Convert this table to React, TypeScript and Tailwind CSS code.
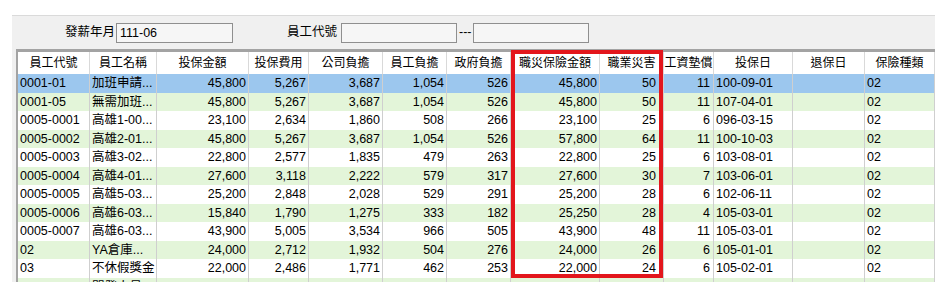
import React from "react";

type Align = "l" | "r"

const columns: { label: string, align: Align, pad?: string }[] = [
    {label: "員工代號", align: "l"},
    {label: "員工名稱", align: "l"},
    {label: "投保金額", align: "r"},
    {label: "投保費用", align: "r"},
    {label: "公司負擔", align: "r"},
    {label: "員工負擔", align: "r"},
    {label: "政府負擔", align: "r"},
    {label: "職災保險金額", align: "r"},
    {label: "職業災害", align: "r", pad: "pr-[7px]"},
    {label: "工資墊償", align: "r", pad: "pr-[3px]"},
    {label: "投保日", align: "l"},
    {label: "退保日", align: "l"},
    {label: "保險種類", align: "l"},
]

const rows: string[][] = [
    ["0001-01", "加班申請...", "45,800", "5,267", "3,687", "1,054", "526", "45,800", "50", "11", "100-09-01", "", "02"],
    ["0001-05", "無需加班...", "45,800", "5,267", "3,687", "1,054", "526", "45,800", "50", "11", "107-04-01", "", "02"],
    ["0005-0001", "高雄1-00...", "23,100", "2,634", "1,860", "508", "266", "23,100", "25", "6", "096-03-15", "", "02"],
    ["0005-0002", "高雄2-01...", "45,800", "5,267", "3,687", "1,054", "526", "57,800", "64", "11", "100-10-03", "", "02"],
    ["0005-0003", "高雄3-02...", "22,800", "2,577", "1,835", "479", "263", "22,800", "25", "6", "103-08-01", "", "02"],
    ["0005-0004", "高雄4-01...", "27,600", "3,118", "2,222", "579", "317", "27,600", "30", "7", "103-06-01", "", "02"],
    ["0005-0005", "高雄5-03...", "25,200", "2,848", "2,028", "529", "291", "25,200", "28", "6", "102-06-11", "", "02"],
    ["0005-0006", "高雄6-03...", "15,840", "1,790", "1,275", "333", "182", "25,250", "28", "4", "105-03-01", "", "02"],
    ["0005-0007", "高雄6-03...", "43,900", "5,005", "3,534", "966", "505", "43,900", "48", "11", "105-03-01", "", "02"],
    ["02", "YA倉庫...", "24,000", "2,712", "1,932", "504", "276", "24,000", "26", "6", "105-01-01", "", "02"],
    ["03", "不休假獎金", "22,000", "2,486", "1,771", "462", "253", "22,000", "24", "6", "105-02-01", "", "02"],
    ["0004", "開發人員", "34,800", "4,185", "3,008", "785", "415", "34,800", "41", "8", "103-12-01", "", "02"],
]

const gridCols = "grid grid-cols-[72px_67px_92px_60px_74px_64px_64px_89px_64px_50px_79px_72px_70px]"

const rowBg = (i: number) => {
    if (i === 0) return "bg-[#9cc7ee]"
    return i % 2 === 1 ? "bg-[#e3f5d9]" : "bg-white"
}

const FieldBox = ({value, width}: { value?: string, width: string }) => (
    <div className={`${width} h-[20px] border border-[#8f8f8f] bg-[#f6f6f6] px-[3px] leading-[18px] text-[12.5px]`}>
        {value}
    </div>
)

export default function App() {
    return (
        <div className="w-[948px] h-[301px] bg-white pt-[15px] pl-[12px]"
             style={{fontFamily: '"Liberation Sans", "Noto Sans CJK TC", sans-serif'}}>
            <div className="relative w-[923px] h-[267px] overflow-hidden bg-[#f0f0f0] border-t border-[#dadada] text-black">
                <div className="flex items-center h-[33px] text-[12.5px]">
                    <div className="w-[104px] text-right pr-[1px]">發薪年月</div>
                    <FieldBox value="111-06" width="w-[117px]"/>
                    <div className="w-[108px] text-right pr-[4px]">員工代號</div>
                    <FieldBox width="w-[116px]"/>
                    <div className="w-[16px] pl-[2px]">---</div>
                    <FieldBox width="w-[116px]"/>
                </div>

                <div className="ml-[4px] border-t-[3px] border-l-[2px] border-[#a3a3a3] text-[12.5px]">
                    <div className={`${gridCols} h-[22px] bg-white text-[12px]`}>
                        {columns.map((c) => (
                            <div key={c.label}
                                 className="border-r border-[#d9d9d9] text-center leading-[22px] whitespace-nowrap overflow-hidden">
                                {c.label}
                            </div>
                        ))}
                    </div>
                    {rows.map((r, i) => (
                        <div key={i} className={`${gridCols} h-[18.5px] ${rowBg(i)}`}>
                            {r.map((v, j) => (
                                <div key={j}
                                     className={`border-r border-[#cfcfcf] leading-[18px] whitespace-nowrap overflow-hidden ${columns[j].align === "r" ? "text-right" : "text-left pl-[2px]"} ${columns[j].align === "r" ? (columns[j].pad ?? "pr-[2px]") : ""}`}>
                                    {v}
                                </div>
                            ))}
                        </div>
                    ))}
                </div>

                {/* highlight around the occupational-injury columns */}
                <div className="absolute left-[499px] top-[34px] w-[152px] h-[228px] border-4 border-[#e3161c]"/>
            </div>
        </div>
    )
}
